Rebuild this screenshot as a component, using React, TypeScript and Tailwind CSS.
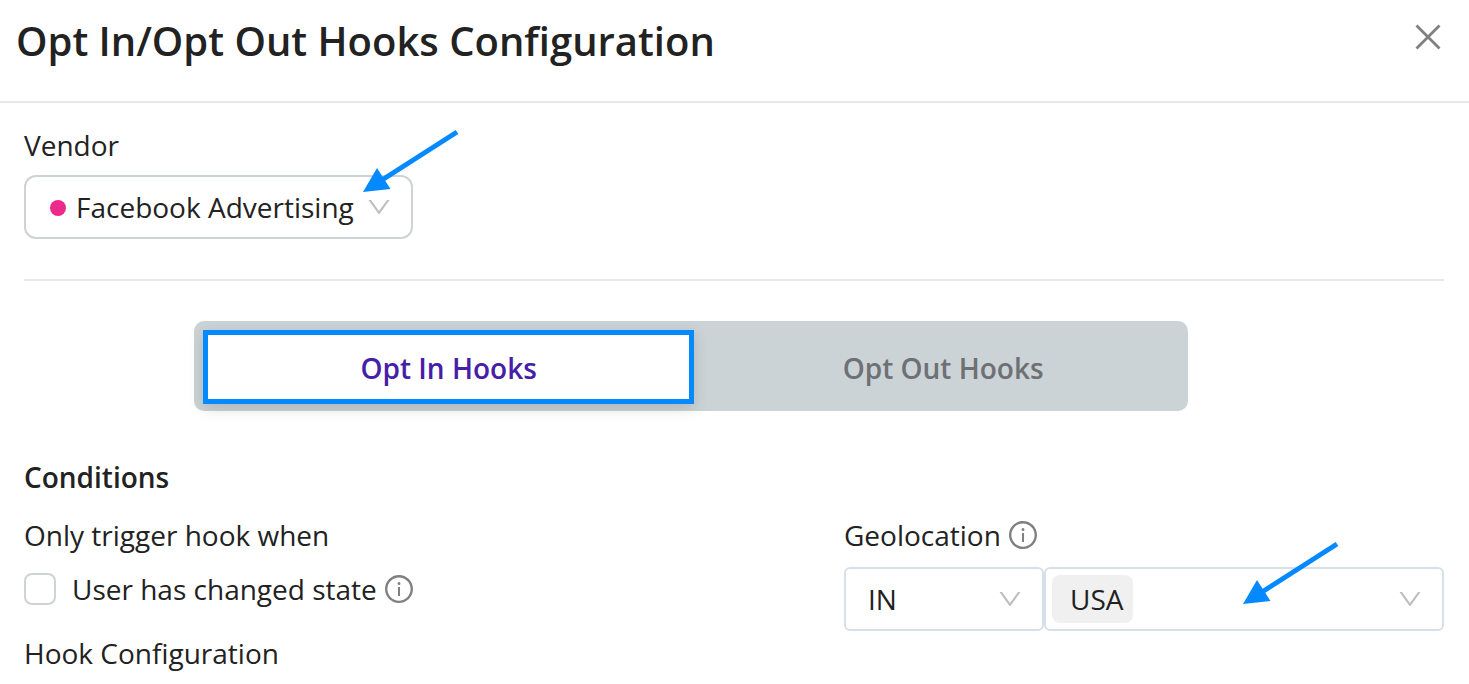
import React, { useState } from "react";
import { AiOutlineDown, AiOutlineInfoCircle } from "react-icons/ai";

const tabs = ["Opt In Hooks", "Opt Out Hooks"];

const getTabStyle = (active: boolean) =>
  active
    ? "border-[5px] border-[#0589ff] bg-white text-[#4520a6] shadow-[0_4px_14px_rgba(0,0,0,0.15)]"
    : "text-[#6d7074]";

const Arrow = ({ className }: { className: string }) => (
  <svg
    className={`pointer-events-none absolute ${className}`}
    width="98"
    height="66"
    viewBox="0 0 98 66"
    aria-hidden="true"
  >
    <path d="M95 3 L20 51" stroke="#0589ff" strokeWidth="5" />
    <path d="M1 63 L15 39 L28.5 60 Z" fill="#0589ff" />
  </svg>
);

const Chevron = () => (
  <AiOutlineDown
    size={28}
    className="pointer-events-none absolute right-5 top-[18px] text-[#bfbfbf]"
  />
);

const App = () => {
  const [activeTab, setActiveTab] = useState(tabs[0]);
  const [changed, setChanged] = useState(false);

  return (
    <div className="bg-white font-['Open_Sans',sans-serif] text-[28px] leading-10 text-[#222222]">
      <header className="flex items-start justify-between border-b-2 border-[#e8e8e8] pb-8 pl-4 pr-7 pt-3">
        <h1 className="text-[40px] font-semibold leading-[57px]">
          Opt In/Opt Out Hooks Configuration
        </h1>
        <button type="button" aria-label="Close" className="mt-3 cursor-pointer">
          <svg width="26" height="26" viewBox="0 0 26 26" fill="none">
            <path d="M1.5 1.5 L24.5 24.5 M24.5 1.5 L1.5 24.5" stroke="#808080" strokeWidth="2.8" />
          </svg>
        </button>
      </header>

      <main className="pb-3 pl-6 pr-[25px] pt-[22px]">
        <label htmlFor="vendor" className="block">
          Vendor
        </label>
        <div className="relative mt-[10px] w-fit">
          <span className="pointer-events-none absolute left-[26px] top-[25px] size-4 rounded-full bg-[#eb2a8b]" />
          <select
            id="vendor"
            className="block h-16 w-[389px] appearance-none rounded-xl border-2 border-[#cdd3d6] bg-transparent pl-[50px]"
          >
            <option>Facebook Advertising</option>
          </select>
          <Chevron />
          <Arrow className="-right-[47px] -top-[46px]" />
        </div>

        <hr className="mt-10 border-t-2 border-[#e8e8e8]" />

        <div
          role="tablist"
          className="ml-[12%] mt-10 grid w-[70%] grid-cols-2 gap-1 rounded-[10px] bg-[#ccd3d6] pb-[7px] pl-[9px] pt-[9px]"
        >
          {tabs.map((tab) => (
            <button
              key={tab}
              type="button"
              role="tab"
              aria-selected={tab === activeTab}
              onClick={() => setActiveTab(tab)}
              className={`flex h-[74px] cursor-pointer items-center justify-center pt-[2px] font-semibold ${getTabStyle(
                tab === activeTab
              )}`}
            >
              {tab}
            </button>
          ))}
        </div>

        <h2 className="mt-[46px] font-semibold">Conditions</h2>

        <div className="mt-[18px] flex justify-between">
          <div>
            <p>Only trigger hook when</p>
            <div className="mt-[14px] flex items-center">
              <input
                id="changed"
                type="checkbox"
                checked={changed}
                onChange={(e) => setChanged(e.target.checked)}
                className="size-8 appearance-none rounded-lg border-2 border-[#cdd3d6] checked:bg-[#4520a6]"
              />
              <label htmlFor="changed" className="ml-4">
                User has changed state
              </label>
              <AiOutlineInfoCircle size={32} className="ml-[6px] text-[#808080]" />
            </div>
            <p className="mt-6">Hook Configuration</p>
          </div>

          <div className="w-[600px]">
            <div className="flex items-center">
              <label htmlFor="country">Geolocation</label>
              <AiOutlineInfoCircle size={32} className="ml-[6px] text-[#808080]" />
            </div>
            <div className="mt-3 flex">
              <div className="relative w-1/3">
                <select
                  aria-label="Geolocation rule"
                  className="block h-16 w-full appearance-none rounded-md border-2 border-[#d5e0e9] bg-transparent pl-[22px]"
                >
                  <option>IN</option>
                  <option>NOT IN</option>
                </select>
                <Chevron />
              </div>
              <div className="relative w-2/3">
                <span className="pointer-events-none absolute left-2 top-2 h-12 w-[81px] rounded-lg bg-[#f0f0f0]" />
                <select
                  id="country"
                  className="relative block h-16 w-full appearance-none rounded-md border-2 border-[#d5e0e9] bg-transparent pl-6"
                >
                  <option>USA</option>
                </select>
                <Chevron />
                <Arrow className="-top-[26px] right-[104px]" />
              </div>
            </div>
          </div>
        </div>
      </main>
    </div>
  );
};

export default App;
